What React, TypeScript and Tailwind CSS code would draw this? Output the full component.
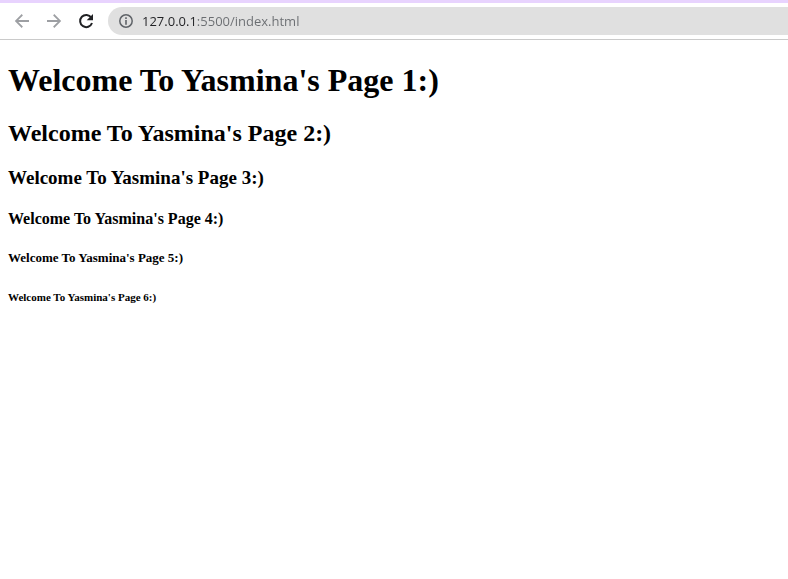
const title = "Welcome To Yasmina's Page";

function BackIcon() {
  return (
    <svg viewBox="0 0 16 16" className="size-4 fill-[#9d9fa3]" aria-hidden="true">
      <path d="M15 7.1H4.3l4.6-4.7L7.7 1.1.8 8l6.9 6.9 1.2-1.3-4.6-4.7H15z" />
    </svg>
  );
}

function ForwardIcon() {
  return (
    <svg viewBox="0 0 16 16" className="size-4 fill-[#9d9fa3]" aria-hidden="true">
      <path d="M1 7.1h10.7L7.1 2.4l1.2-1.3L15.2 8l-6.9 6.9-1.2-1.3 4.6-4.7H1z" />
    </svg>
  );
}

function ReloadIcon() {
  return (
    <svg viewBox="0 0 16 16" className="size-4" fill="none" aria-hidden="true">
      <path d="M13.3 4.6A6.1 6.1 0 1 0 14 10" stroke="#202124" strokeWidth="2" />
      <path d="M15 1v6.3H8.7z" fill="#202124" />
    </svg>
  );
}

function InfoIcon() {
  return (
    <svg viewBox="0 0 14 14" className="size-3.5" fill="none" aria-hidden="true">
      <circle cx="7" cy="7" r="6.2" stroke="#5f6368" strokeWidth="1.5" />
      <path d="M7 3.3v1.6M7 6v4.7" stroke="#5f6368" strokeWidth="1.6" />
    </svg>
  );
}

function Toolbar() {
  return (
    <header className="border-t-3 border-b border-t-[#e8d3fe] border-b-[#cacaca] bg-white">
      <div className="flex items-center py-1 pl-3.5">
        <nav aria-label="Navigation" className="flex gap-4">
          <button type="button" aria-label="Back"><BackIcon /></button>
          <button type="button" aria-label="Forward"><ForwardIcon /></button>
          <button type="button" aria-label="Reload"><ReloadIcon /></button>
        </nav>
        <div className="ml-3.5 flex h-7 flex-1 items-center gap-[9px] rounded-l-full bg-[#e0e0e0] pl-[11px]">
          <button type="button" aria-label="View site information"><InfoIcon /></button>
          <input
            type="text"
            aria-label="Address"
            defaultValue="127.0.0.1:5500/index.html"
            className="h-5 min-w-0 flex-1 bg-[linear-gradient(to_right,#202124_54px,#6a6d71_54px)] bg-clip-text font-['Open_Sans','Noto_Sans',sans-serif] text-[13px] leading-5 text-transparent caret-[#202124] outline-none"
          />
        </div>
      </div>
    </header>
  );
}

export default function App() {
  return (
    <div className="min-h-screen bg-white">
      <Toolbar />
      <main className="px-2 pt-[22px] font-['Liberation_Serif','Times_New_Roman',serif] font-bold text-black">
        <h1 className="text-[32px] leading-[37px]">{title} 1:)</h1>
        <h2 className="mt-[21px] text-[24px] leading-[27px]">{title} 2:)</h2>
        <h3 className="mt-5 text-[19px] leading-[21px]">{title} 3:)</h3>
        <h4 className="mt-[22px] text-[16px] leading-[18px]">{title} 4:)</h4>
        <h5 className="mt-[22px] text-[13px] leading-[15px]">{title} 5:)</h5>
        <h6 className="mt-[26px] text-[11px] leading-[13px]">{title} 6:)</h6>
      </main>
    </div>
  );
}
